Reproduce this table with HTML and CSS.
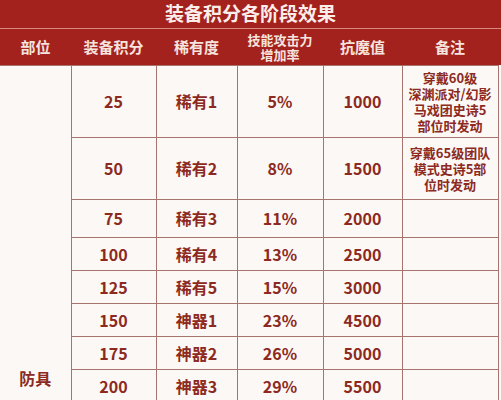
FILE: index.html
```html
<!DOCTYPE html>
<html lang="zh">
<head>
<meta charset="utf-8">
<link rel="stylesheet" href="styles.css">
</head>
<body>
<div class="title">装备积分各阶段效果</div>
<table class="grid">
  <colgroup>
    <col class="c1"><col class="c2"><col class="c3"><col class="c4"><col class="c5"><col class="c6">
  </colgroup>
  <thead>
    <tr class="head">
      <th>部位</th>
      <th>装备积分</th>
      <th>稀有度</th>
      <th class="two">技能攻击力<br>增加率</th>
      <th>抗魔值</th>
      <th class="last">备注</th>
    </tr>
  </thead>
  <tbody>
    <tr class="r1">
      <td class="part" rowspan="8">防具</td>
      <td>25</td><td>稀有1</td><td>5%</td><td>1000</td>
      <td class="note">穿戴60级<br>深渊派对/幻影<br>马戏团史诗5<br>部位时发动</td>
    </tr>
    <tr class="r2">
      <td>50</td><td>稀有2</td><td>8%</td><td>1500</td>
      <td class="note">穿戴65级团队<br>模式史诗5部<br>位时发动</td>
    </tr>
    <tr class="r3"><td>75</td><td>稀有3</td><td>11%</td><td>2000</td><td></td></tr>
    <tr class="rn"><td>100</td><td>稀有4</td><td>13%</td><td>2500</td><td></td></tr>
    <tr class="rn"><td>125</td><td>稀有5</td><td>15%</td><td>3000</td><td></td></tr>
    <tr class="rn"><td>150</td><td>神器1</td><td>23%</td><td>4500</td><td></td></tr>
    <tr class="rn"><td>175</td><td>神器2</td><td>26%</td><td>5000</td><td></td></tr>
    <tr class="rn"><td>200</td><td>神器3</td><td>29%</td><td>5500</td><td></td></tr>
  </tbody>
</table>
</body>
</html>
```

FILE: styles.css
```css
html, body {
  margin: 0;
  padding: 0;
  background: #fbf8f5;
}
body {
  width: 501px;
  font-family: "Noto Sans CJK SC", "Noto Sans", sans-serif;
  color: #8c2a22;
}
.title {
  height: 29px;
  box-sizing: border-box;
  background: #a4221d;
  color: #fbeeea;
  font-size: 19px;
  font-weight: 700;
  line-height: 26px;
  text-align: center;
  border-bottom: 1px solid #d98a80;
}
.grid {
  width: 498px;
  border-collapse: collapse;
  table-layout: fixed;
}
.c1 { width: 71px; }
.c2 { width: 85px; }
.c3 { width: 81px; }
.c4 { width: 86px; }
.c5 { width: 79px; }
.c6 { width: 96px; }
.head {
  height: 36px;
  background: #a4221d;
}
.head th {
  color: #f6e4df;
  font-size: 15px;
  font-weight: 700;
  line-height: 18px;
  padding: 0;
  text-align: center;
  vertical-align: middle;
}
.head th.two {
  font-size: 13px;
  line-height: 15px;
}
.head th.last {
  box-shadow: 3px 0 0 #a4221d;
}
tbody td {
  border: 1px solid #a8756e;
  padding: 0;
  text-align: center;
  vertical-align: middle;
  font-size: 16px;
  font-weight: 700;
  line-height: 18px;
}
tbody td.part {
  border-left: none;
  vertical-align: bottom;
  padding-bottom: 15px;
}
tbody td.note {
  font-size: 13px;
  line-height: 16px;
  padding-top: 1px;
}
.r1 { height: 72px; }
.r2 { height: 62px; }
.r3 { height: 38px; }
.rn { height: 33px; }
```
